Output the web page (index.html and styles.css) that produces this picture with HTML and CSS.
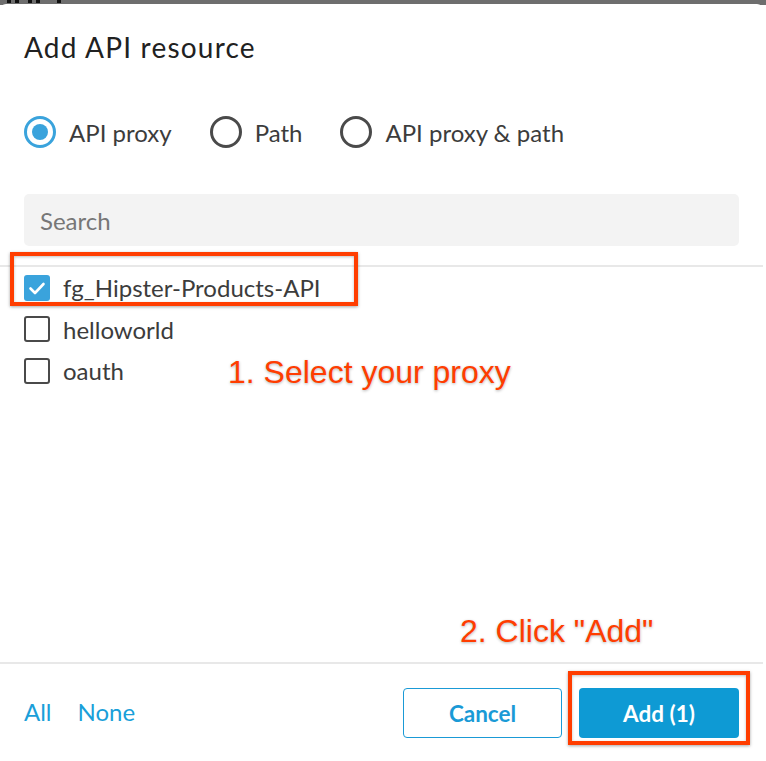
FILE: index.html
```html
<!DOCTYPE html>
<html>
<head>
<meta charset="utf-8">
<link rel="stylesheet" href="styles.css">
</head>
<body>
<div class="topbar"><span class="mark m1"></span><span class="mark m2"></span><span class="mark m3"></span><span class="mark m4"></span><span class="mark m5"></span></div>
<div class="dialog">
  <h1 class="title">Add API resource</h1>
  <div class="radios">
    <label class="radio"><span class="circle checked"></span>API proxy</label>
    <label class="radio"><span class="circle"></span>Path</label>
    <label class="radio"><span class="circle"></span>API proxy &amp; path</label>
  </div>
  <div class="search">Search</div>
  <div class="list">
    <div class="item"><span class="box checked"><svg width="26" height="26" viewBox="0 0 26 26"><path d="M6.5 13.5l4.5 4.5 8.5-9" fill="none" stroke="#fff" stroke-width="2.6" stroke-linecap="round" stroke-linejoin="round"/></svg></span>fg_Hipster-Products-API</div>
    <div class="item"><span class="box"></span>helloworld</div>
    <div class="item"><span class="box"></span>oauth</div>
    <div class="hl hl1"></div>
    <div class="note note1">1. Select your proxy</div>
    <div class="note note2">2. Click "Add"</div>
  </div>
  <div class="footer">
    <div class="links"><a class="link">All</a><a class="link">None</a></div>
    <div class="buttons">
      <button class="btn cancel">Cancel</button>
      <button class="btn add">Add (1)</button>
    </div>
    <div class="hl hl2"></div>
  </div>
</div>
</body>
</html>
```
FILE: styles.css
```css
html, body { margin: 0; padding: 0; background: #fff; }
body { width: 766px; height: 761px; overflow: hidden; font-family: Lato, "Noto Sans", sans-serif; }
.topbar { height: 5px; background: #6e6e6e; display: flex; overflow: hidden; }
.mark { display: block; height: 3px; background: #111; }
.m1 { margin-left: 7px; width: 4px; }
.m2 { margin-left: 4px; width: 4px; }
.m3 { margin-left: 9px; width: 4px; }
.m4 { margin-left: 4px; width: 4px; }
.m5 { margin-left: 17px; width: 4px; }
.dialog { position: relative; width: 763px; height: 756px; background: #fff; border-radius: 6px 6px 0 0; margin-top: -1px; display: flex; flex-direction: column; }
.title { margin: 0; padding: 26px 24px 0; font-family: Lato, sans-serif; font-weight: 400; font-size: 28px; letter-spacing: 1.2px; line-height: 34px; color: #212121; height: 61px; box-sizing: border-box; }
.radios { display: flex; align-items: center; padding: 0 24px; height: 50px; margin-top: 42px; }
.radio { display: flex; align-items: center; font-size: 24px; color: #3c3c3c; margin-right: 38px; }
.circle { width: 32px; height: 32px; box-sizing: border-box; border: 3px solid #4a4a4a; border-radius: 50%; margin-right: 13px; position: relative; }
.circle.checked { border-color: #3aa3dc; }
.circle.checked::after { content: ""; position: absolute; left: 5px; top: 5px; width: 16px; height: 16px; border-radius: 50%; background: #3aa3dc; }
.search { margin: 37px 24px 0 24px; height: 52px; background: #f3f3f3; border-radius: 5px; padding-left: 16px; display: flex; align-items: center; font-size: 24px; color: #777; }
.list { position: relative; margin-top: 19px; border-top: 2px solid #e8e8e8; height: 395px; padding-top: 0; box-sizing: content-box; }
.item { display: flex; align-items: center; height: 41.5px; padding-left: 24px; font-size: 24px; color: #3c3c3c; }
.box { width: 26px; height: 26px; box-sizing: border-box; border: 2.5px solid #4a4a4a; border-radius: 3px; margin-right: 13px; display: flex; }
.box.checked { border: none; background: #3aa3dc; }
.hl { position: absolute; border: 4px solid #ff3d00; box-shadow: 0 1px 3px rgba(0,0,0,0.35), inset 0 1px 3px rgba(0,0,0,0.25); }
.hl1 { left: 10px; top: -15px; width: 340px; height: 46px; }
.note { position: absolute; font-family: "Liberation Sans", Arial, sans-serif; font-size: 32px; line-height: 37px; color: #ff3d00; text-shadow: 0 1px 3px rgba(0,0,0,0.3); white-space: nowrap; }
.note1 { left: 228px; top: 87px; }
.note2 { left: 460px; top: 346px; }
.footer { position: relative; border-top: 2px solid #e8e8e8; height: 92px; display: flex; align-items: center; justify-content: space-between; padding: 0 24px; }
.links { display: flex; gap: 26px; margin-top: 2px; }
.link { font-size: 24px; color: #1a9fd9; }
.buttons { display: flex; gap: 17px; margin-top: 6px; }
.btn { font-family: Lato, sans-serif; font-size: 22.5px; font-weight: 700; height: 50px; border-radius: 4px; width: 159px; }
.cancel { background: #fff; color: #1a9ad6; border: 1.5px solid #1a9ad6; }
.add { background: #0e9ad4; color: #fff; border: none; width: 160px; }
.hl2 { left: 568px; top: 7px; width: 174px; height: 66px; }
```
